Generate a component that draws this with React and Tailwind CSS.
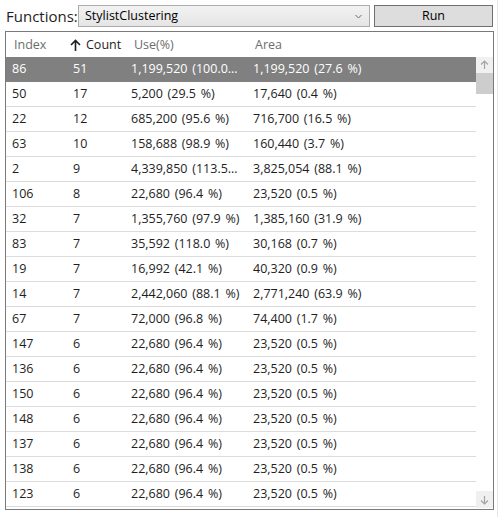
import React from 'react';

const rows = [
    ['86', '51', '1,199,520 (100.0 %)', '1,199,520 (27.6 %)'],
    ['50', '17', '5,200 (29.5 %)', '17,640 (0.4 %)'],
    ['22', '12', '685,200 (95.6 %)', '716,700 (16.5 %)'],
    ['63', '10', '158,688 (98.9 %)', '160,440 (3.7 %)'],
    ['2', '9', '4,339,850 (113.5 %)', '3,825,054 (88.1 %)'],
    ['106', '8', '22,680 (96.4 %)', '23,520 (0.5 %)'],
    ['32', '7', '1,355,760 (97.9 %)', '1,385,160 (31.9 %)'],
    ['83', '7', '35,592 (118.0 %)', '30,168 (0.7 %)'],
    ['19', '7', '16,992 (42.1 %)', '40,320 (0.9 %)'],
    ['14', '7', '2,442,060 (88.1 %)', '2,771,240 (63.9 %)'],
    ['67', '7', '72,000 (96.8 %)', '74,400 (1.7 %)'],
    ['147', '6', '22,680 (96.4 %)', '23,520 (0.5 %)'],
    ['136', '6', '22,680 (96.4 %)', '23,520 (0.5 %)'],
    ['150', '6', '22,680 (96.4 %)', '23,520 (0.5 %)'],
    ['148', '6', '22,680 (96.4 %)', '23,520 (0.5 %)'],
    ['137', '6', '22,680 (96.4 %)', '23,520 (0.5 %)'],
    ['138', '6', '22,680 (96.4 %)', '23,520 (0.5 %)'],
    ['123', '6', '22,680 (96.4 %)', '23,520 (0.5 %)'],
];

const ScrollArrow = ({ down }) => (
    <svg width="9" height="10" viewBox="0 0 9 10" className={down ? 'rotate-180' : ''}>
        <path d="M4.5 1 V9 M1 4.5 L4.5 1 L8 4.5" fill="none" stroke="#a3a3a3" strokeWidth="1.2" />
    </svg>
);

const App = () => {
    return (
        <div className="w-[499px] h-[517px] bg-white relative font-['Open_Sans','Noto_Sans',sans-serif] text-[#1e1e1e] overflow-hidden">
            {/* toolbar */}
            <div className="flex items-center pt-[5px] h-[27px]">
                <span className="pl-[6px] w-[78px] text-[15px] leading-none text-[#1e1e1e]">Functions:</span>
                <div className="w-[292px] h-[22px] border border-[#acacac] bg-gradient-to-b from-[#f2f2f2] to-[#e5e5e5] flex items-center justify-between pl-[6px] pr-[7px]">
                    <span className="text-[12.5px] text-black">StylistClustering</span>
                    <svg width="7" height="5" viewBox="0 0 7 5">
                        <path d="M0.5 1 L3.5 4 L6.5 1" fill="none" stroke="#6b6b6b" strokeWidth="1" />
                    </svg>
                </div>
                <button className="ml-[4px] w-[119px] h-[22px] border border-[#707070] bg-[#dddddd] text-[12.5px] text-black flex items-center justify-center">
                    Run
                </button>
            </div>

            {/* list */}
            <div className="ml-[5px] mt-[4px] w-[489px] h-[479px] border border-[#7a7a7a] flex">
                <div className="flex-1 flex flex-col text-[12.5px] [word-spacing:1.5px]">
                    <div className="h-[25px] grid grid-cols-[61px_58px_122px_1fr] items-center text-[#6d6d6d] pt-[1px]">
                        <span className="pl-[8px]">Index</span>
                        <span className="pl-[3px] flex items-center gap-[5px] text-[#1e1e1e]">
                            <svg width="11" height="12" viewBox="0 0 11 12">
                                <path d="M5.5 1.5 V12 M1 6 L5.5 1.5 L10 6" fill="none" stroke="#1e1e1e" strokeWidth="1.6" />
                            </svg>
                            Count
                        </span>
                        <span className="pl-[9px]">Use(%)</span>
                        <span className="pl-[8px]">Area</span>
                    </div>
                    {rows.map((r, i) => (
                        <div
                            key={i}
                            className={`h-[25px] grid grid-cols-[61px_58px_122px_1fr] items-center border-b ${
                                i === 0 ? 'bg-[#808080] text-white border-[#808080]' : 'border-[#dcdcdc]'
                            }`}
                        >
                            <span className="pl-[6px]">{r[0]}</span>
                            <span className="pl-[6px]">{r[1]}</span>
                            <span className="pl-[6px] pr-[6px] truncate">{r[2]}</span>
                            <span className="pl-[6px] truncate">{r[3]}</span>
                        </div>
                    ))}
                </div>

                {/* scrollbar */}
                <div className="w-[17px] flex flex-col">
                    <div className="h-[25px]"></div>
                    <div className="h-[16px] bg-[#f0f0f0] flex items-center justify-center">
                        <ScrollArrow />
                    </div>
                    <div className="h-[21px] bg-[#cdcdcd]"></div>
                    <div className="flex-1"></div>
                    <div className="h-[17px] bg-[#f0f0f0] flex items-center justify-center mb-[1px]">
                        <ScrollArrow down />
                    </div>
                </div>
            </div>

            <div className="absolute top-0 right-[1px] w-px h-full bg-[#e6e6e6]"></div>
        </div>
    );
};

export default App;
